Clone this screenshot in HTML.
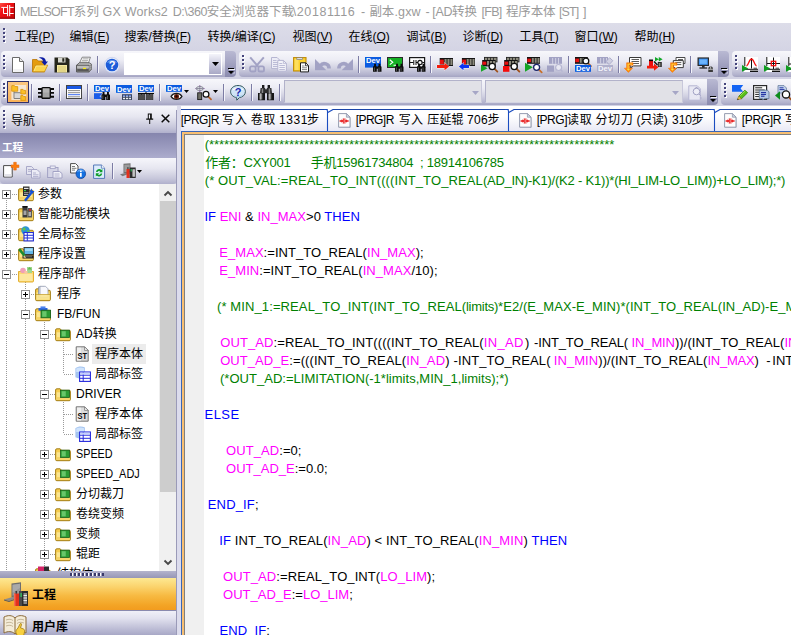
<!DOCTYPE html>
<html><head><meta charset="utf-8"><title>GX Works2</title>
<style>
*{box-sizing:border-box;margin:0;padding:0}
html,body{width:791px;height:635px;overflow:hidden}
body{position:relative;background:#d2d2e3;font-family:"Liberation Sans","Noto Sans CJK SC",sans-serif;font-size:12px;color:#000}
.a,.ic,.grip,.tb,.sep,.ovf,.cb{position:absolute}
.ic{overflow:visible}
svg text{font-family:"Liberation Sans",sans-serif}
#title{left:0;top:0;width:791px;height:23px;background:#fff}
#title span{position:absolute;top:3px;margin-left:-.5px;font-size:12.5px;color:#9a9a9a;white-space:nowrap;line-height:19px}
#menu{left:0;top:23px;width:791px;height:28px;background:linear-gradient(#dddde9,#d4d4e4)}
#menu span{position:absolute;margin-left:-.6px;top:6px;line-height:17px;font-size:12px;white-space:nowrap}
.grip{width:3px;background:repeating-linear-gradient(#45457c 0 2px,transparent 2px 4px) 0 0/2px 100% no-repeat,repeating-linear-gradient(transparent 0 1px,#fff 1px 3px,transparent 3px 4px) 1px 0/2px 100% no-repeat}
.tb{height:26px;background:linear-gradient(#f7f7fb 0%,#ececf4 35%,#d2d2e2 65%,#b4b4ce 90%,#a4a4c2 100%);border-radius:4px 0 0 4px}
.sep{width:1px;height:17px;background:#7c7ca4;box-shadow:1px 0 0 #f4f4fa}
.ovf{width:11px;height:26px;background:linear-gradient(#b9b9d3,#8a8aae);border-radius:0 4px 4px 0}
.cb{height:23px;background:#e1e1e7;border:1px solid #b2b2ca;border-bottom-color:#d4d4e2;border-right-color:#c8c8da}
#code{left:0;top:136px;width:791px;font-size:13px;line-height:18px;color:#000}
#code div{position:absolute;height:18px;white-space:pre;line-height:18px}
.g{color:#008000}.b{color:#0000ff}.m{color:#ff00ff}
.tr{position:absolute;font-size:12px;line-height:16px;height:16px;white-space:nowrap}
.ex{position:absolute;width:9px;height:9px;border:1px solid #919191;background:#fff}
.ex:before{content:"";position:absolute;left:1px;top:3px;width:5px;height:1px;background:#000}
.ex.p:after{content:"";position:absolute;left:3px;top:1px;width:1px;height:5px;background:#000}
.dv{position:absolute;width:1px;background:repeating-linear-gradient(#9a9a9a 0 1px,transparent 1px 2px)}
.dh{position:absolute;height:1px;background:repeating-linear-gradient(90deg,#9a9a9a 0 1px,transparent 1px 2px)}
.tab{position:absolute;top:112px;font-size:12px;line-height:17px;white-space:nowrap}
</style></head><body>
<div id="title" class="a"><svg class="ic" style="left:0px;top:3px" width="16" height="16" viewBox="0 0 16 16" ><defs><linearGradient id="lg1" x1="0" y1="0" x2="1" y2="1"><stop offset="0" stop-color="#ff5048"/><stop offset=".35" stop-color="#f01014"/><stop offset="1" stop-color="#c80408"/></linearGradient></defs><rect x="0" y="0" width="15" height="15.700" fill="url(#lg1)"/><path d="M14.500 0v15.700M0 15.200h15" stroke="#8c0404" stroke-width="1"/><path d="M7.600 2v11.200M9.700 2v11.200M1.300 4.400h6.300M9.700 4.400h4M3.500 10.500h4.100M9.700 10.500h4M3.500 4.400v6.100" stroke="#fff" stroke-width="1" fill="none"/></svg><span id="t0" style="left:20.4px;letter-spacing:-0.707px">MELSOFT</span><span id="t1" style="left:74.2px;letter-spacing:0.342px">系列</span><span id="t2" style="left:103.0px;letter-spacing:0.203px">GX Works2</span><span id="t3" style="left:173.2px;letter-spacing:-0.424px">D:\360</span><span id="t4" style="left:207.3px;letter-spacing:-0.059px">安全浏览器下载</span><span id="t5" style="left:293.3px;letter-spacing:0.574px">\20181116</span><span id="t6" style="left:361.5px;letter-spacing:0px">-</span><span id="t7" style="left:369.9px;letter-spacing:-0.058px">副本</span><span id="t8" style="left:395.0px;letter-spacing:0.149px">.gxw</span><span id="t9" style="left:426.0px;letter-spacing:0px">-</span><span id="t10" style="left:432.8px;letter-spacing:-0.281px">[AD</span><span id="t11" style="left:452.5px;letter-spacing:-0.008px">转换</span><span id="t12" style="left:482.1px;letter-spacing:-0.73px">[FB]</span><span id="t13" style="left:506.5px;letter-spacing:-0.129px">程序本体</span><span id="t14" style="left:559.5px;letter-spacing:-0.93px">[ST]</span><span id="t15" style="left:583.5px;letter-spacing:0px">]</span></div>
<div id="menu" class="a"><i class="grip" style="left:3px;top:5px;height:15px"></i>
<span style="left:15px">工程(<u>P</u>)</span>
<span style="left:70px">编辑(<u>E</u>)</span>
<span style="left:125px">搜索/替换(<u>F</u>)</span>
<span style="left:208px">转换/编译(<u>C</u>)</span>
<span style="left:293px">视图(<u>V</u>)</span>
<span style="left:349px">在线(<u>O</u>)</span>
<span style="left:407px">调试(<u>B</u>)</span>
<span style="left:463px">诊断(<u>D</u>)</span>
<span style="left:520px">工具(<u>T</u>)</span>
<span style="left:575px">窗口(<u>W</u>)</span>
<span style="left:635px">帮助(<u>H</u>)</span>
</div>
<div class="tb" style="left:1px;top:51px;width:224px"></div><div class="ovf" style="left:225px;top:51px"></div>
<div class="tb" style="left:239px;top:51px;width:479px"></div><div class="ovf" style="left:718px;top:51px"></div>
<div class="tb" style="left:732px;top:51px;width:60px"></div>
<i class="grip" style="left:3px;top:55px;height:15px"></i>
<i class="grip" style="left:242px;top:55px;height:15px"></i>
<i class="grip" style="left:735px;top:55px;height:15px"></i>
<i class="sep" style="left:97px;top:56px"></i>
<i class="sep" style="left:358px;top:56px"></i>
<i class="sep" style="left:430px;top:56px"></i>
<i class="sep" style="left:568px;top:56px"></i>
<i class="sep" style="left:618px;top:56px"></i>
<i class="sep" style="left:690px;top:56px"></i>
<svg class="ic" style="left:10px;top:57px" width="16" height="16" viewBox="0 0 16 16" ><path d="M2.5 .5h7l4 4v11h-11z" fill="#fff" stroke="#6a6a6a"/><path d="M9.5 .5v4h4" fill="#e8e8e8" stroke="#6a6a6a"/><path d="M3.5 12h9v3h-9z" fill="#ececf0" opacity=".7"/></svg>
<svg class="ic" style="left:32px;top:57px" width="16" height="16" viewBox="0 0 16 16" ><path d="M.5 2.500h4.500l1.200 1.500h6.300v10.800h-12z" fill="#e49c10" stroke="#b87404" stroke-width=".8"/><path d="M.7 14.800l2.800-6.600h12.200l-3.200 6.600z" fill="#fcd44c" stroke="#c88c0c" stroke-width=".8"/><path d="M2 14l2.200-5h10.300" fill="none" stroke="#fde890" stroke-width=".9"/><path d="M6.800 .8c3.600-1.400 6.800 .2 7.200 3.600h2l-3.200 4.200l-3.600-4.200h2c-.4-2-2.200-3-4.400-3.600z" fill="#0c1ca4"/></svg>
<svg class="ic" style="left:54px;top:57px" width="16" height="16" viewBox="0 0 16 16" ><path d="M.5 .5h13l2 2v13h-15z" fill="#26261c"/><rect x="4" y=".5" width="7.500" height="5" fill="#d8d8d0"/><rect x="8.300" y="1.200" width="2" height="3.500" fill="#26261c"/><rect x="3" y="8" width="10" height="7.500" fill="#f4e8a0"/><path d="M4 10h8M4 12h8M4 14h8" stroke="#c8b860" stroke-width=".8"/></svg>
<svg class="ic" style="left:76px;top:57px" width="16" height="16" viewBox="0 0 16 16" ><path d="M3.500 6.200l2.700-6h8.200l-2 6z" fill="#fff" stroke="#6a6a6a" stroke-width=".8"/><path d="M6.600 1.800h6M6 3.400h6M5.400 5h6" stroke="#8a8a8a" stroke-width=".7"/><path d="M.6 8.200l2.800-2.400h9.800l2.300 1.400v5.300l-2.300 2.300h-12.600z" fill="#c4c4c4" stroke="#4a4a4a" stroke-width=".8"/><path d="M.6 8.200h12.600v6.600h-12.600z" fill="#a0a0a0" stroke="#4a4a4a" stroke-width=".8"/><path d="M1 10h12" stroke="#d8d8d8" stroke-width="1"/><path d="M1.200 13h11.400" stroke="#3a3a3a" stroke-width="1.400"/><rect x="7" y="10.800" width="3" height="1.300" fill="#f8ec10"/><path d="M13.200 8.200l2.300-1v5.300l-2.300 2.300z" fill="#8a8a8a"/><path d="M13.800 9.500v3.500M14.800 8.800v3" stroke="#d0d0d0" stroke-width=".6" stroke-dasharray="1 1"/></svg>
<svg class="ic" style="left:104.3px;top:57px" width="16" height="16" viewBox="0 0 16 16" ><circle cx="8" cy="8" r="7.700" fill="#e6ecfa" stroke="#c0c8e8" stroke-width=".6"/><circle cx="8" cy="8" r="6.300" fill="#1c5cd8"/><path d="M3 6a5.500 5 0 0 1 10 0a9 5 0 0 0-10 0z" fill="#6a9cf0"/><text x="8" y="12" font-size="11" font-weight="bold" fill="#fff" text-anchor="middle">?</text></svg>
<svg class="ic" style="left:249px;top:57px" width="16" height="16" viewBox="0 0 16 16" ><path d="M1.200 .3l8.300 9.500M14.800 .3l-8.300 9.500" stroke="#a2a2c4" stroke-width="2" fill="none"/><rect x="1" y="9.300" width="5.600" height="5.200" rx="1.600" fill="none" stroke="#a2a2c4" stroke-width="1.800"/><rect x="9.400" y="9.300" width="5.600" height="5.200" rx="1.600" fill="none" stroke="#a2a2c4" stroke-width="1.800"/></svg>
<svg class="ic" style="left:271px;top:57px" width="16" height="16" viewBox="0 0 16 16" ><path d="M.5 .5h5.600l2.500 2.500v8.600h-8.100z" fill="#ececf6" stroke="#b6b6d2"/><path d="M2 3.500h3.500M2 5.500h5M2 7.500h5M2 9.500h5" stroke="#b6b6d2" stroke-width=".9"/><path d="M6.800 3.400h5.600l3 3v7.800h-8.600z" fill="#f2f2f9" stroke="#b6b6d2"/><path d="M12.400 3.400v3h3" fill="none" stroke="#b6b6d2" stroke-width=".8"/><path d="M8.300 6.500h3M8.300 8.500h5.600M8.300 10.500h5.600M8.300 12.500h5.600" stroke="#b6b6d2" stroke-width=".9"/></svg>
<svg class="ic" style="left:293px;top:57px" width="16" height="16" viewBox="0 0 16 16" ><rect x=".6" y=".6" width="12.400" height="13.400" fill="#fbd02c" stroke="#c08a08" stroke-width="1.100"/><rect x="1.600" y="1.600" width="4" height="11.400" fill="#fde470" opacity=".7"/><rect x="3.800" y=".9" width="5.800" height="1.700" fill="#fff" stroke="#777" stroke-width=".7"/><path d="M7.500 5.800h5.200l2.800 2.800v6.300h-8z" fill="#fff" stroke="#1a1a1a" stroke-width="1"/><path d="M12.500 5.800v3h3" fill="none" stroke="#1a1a1a" stroke-width=".8"/><path d="M9 9h2.500M9 10.800h5M9 12.600h5" stroke="#666" stroke-width=".8"/></svg>
<svg class="ic" style="left:315px;top:57px" width="16" height="16" viewBox="0 0 16 16" ><path d="M0 2v11.200h11.300z" fill="#a2a2c4"/><path d="M5.500 8.500a4.800 4.800 0 0 1 8.600 3" fill="none" stroke="#a2a2c4" stroke-width="3.600"/></svg>
<svg class="ic" style="left:337px;top:57px" width="16" height="16" viewBox="0 0 16 16" ><path d="M16 2v11.200h-11.300z" fill="#a2a2c4"/><path d="M10.500 8.500a4.800 4.800 0 0 0-8.600 3" fill="none" stroke="#a2a2c4" stroke-width="3.600"/></svg>
<svg class="ic" style="left:365px;top:57px" width="16" height="16" viewBox="0 0 16 16" ><rect x="0" y="0" width="16" height="10.6" fill="#0b5be0"/><text x="1" y="6.3" font-size="7.6" font-weight="bold" fill="#fff" textLength="14" lengthAdjust="spacingAndGlyphs">Dev</text><path d="M9.1 6.8h1.900v2l.8 1v5h-3.800v-5l1.100-1zM13.5 6.8h1.900v2l1.100 1v5h-3.800v-5l.8-1zM11.5 9.4h1.500v2.400h-1.500z" fill="#0c0c0c"/><path d="M8.9 10.4h.9v3.600h-.9zM13.6 10.4h.9v3.600h-.9z" fill="#5a5a5a"/></svg>
<svg class="ic" style="left:387px;top:57px" width="16" height="16" viewBox="0 0 16 16" ><rect x=".5" y=".5" width="15" height="10" fill="#14b024" stroke="#2a2a2a" stroke-width="1"/><path d="M2.800 2.800l3 2.400-3 2.400M6.500 8.300h3" stroke="#fff" stroke-width="1.100" fill="none"/><path d="M9.1 6.8h1.900v2l.8 1v5h-3.800v-5l1.100-1zM13.5 6.8h1.900v2l1.100 1v5h-3.800v-5l.8-1zM11.5 9.4h1.500v2.400h-1.500z" fill="#0c0c0c"/><path d="M8.9 10.4h.9v3.600h-.9zM13.6 10.4h.9v3.600h-.9z" fill="#5a5a5a"/></svg>
<svg class="ic" style="left:409px;top:57px" width="16" height="16" viewBox="0 0 16 16" ><rect x=".6" y=".6" width="15" height="9.800" fill="#fff" stroke="#1a1a1a" stroke-width="1.200"/><path d="M1 5.500h3.500M4.800 3v5M7 3v5M7 5.500h2M13.200 5.500h2" stroke="#111" stroke-width="1" fill="none"/><circle cx="11" cy="5.500" r="2.100" fill="none" stroke="#111" stroke-width="1.100"/><path d="M9.1 6.8h1.900v2l.8 1v5h-3.800v-5l1.100-1zM13.5 6.8h1.900v2l1.100 1v5h-3.800v-5l.8-1zM11.5 9.4h1.500v2.400h-1.500z" fill="#0c0c0c"/><path d="M8.9 10.4h.9v3.600h-.9zM13.6 10.4h.9v3.600h-.9z" fill="#5a5a5a"/></svg>
<svg class="ic" style="left:437px;top:57px" width="16" height="16" viewBox="0 0 16 16" ><rect x="2.7" y="1" width="13.3" height="8" fill="#141414"/><rect x="3.0" y="2.6" width="3.800" height="4.8" fill="#e81010"/><rect x="7.50" y="2" width="2.10" height="6" fill="#8c8a7c"/><rect x="10.45" y="2" width="2.10" height="6" fill="#8c8a7c"/><rect x="13.40" y="2" width="2.10" height="6" fill="#8c8a7c"/><path d="M0 8h7.500v-2.300l4.600 3.800-4.600 3.800v-2.300h-7.500z" fill="#f41c0c" stroke="#fff" stroke-width=".7" paint-order="stroke"/></svg>
<svg class="ic" style="left:459px;top:57px" width="16" height="16" viewBox="0 0 16 16" ><rect x="2.9" y="1" width="13.1" height="8" fill="#141414"/><rect x="3.1999999999999997" y="2.6" width="3.800" height="4.8" fill="#e81010"/><rect x="7.70" y="2" width="2.03" height="6" fill="#8c8a7c"/><rect x="10.58" y="2" width="2.03" height="6" fill="#8c8a7c"/><rect x="13.47" y="2" width="2.03" height="6" fill="#8c8a7c"/><path d="M10 8h-5.500v-2.300l-4.600 3.800 4.600 3.800v-2.300h5.500z" fill="#0c34f4" stroke="#fff" stroke-width=".7" paint-order="stroke"/></svg>
<svg class="ic" style="left:481px;top:57px" width="16" height="16" viewBox="0 0 16 16" ><rect x="3.500" y=".4" width="12.500" height="4.500" fill="#8c8a7c" stroke="#222" stroke-width=".9"/><path d="M6.500 .5v4M9.500 .5v4M12.500 .5v4" stroke="#222" stroke-width=".8"/><rect x="1.2" y="3" width="13.5" height="6.4" fill="#141414"/><rect x="1.5" y="4.6" width="3.800" height="3.2" fill="#e81010"/><rect x="6.00" y="4" width="2.17" height="4.4" fill="#8c8a7c"/><rect x="9.02" y="4" width="2.17" height="4.4" fill="#8c8a7c"/><rect x="12.03" y="4" width="2.17" height="4.4" fill="#8c8a7c"/><path d="M0 7.600v7.200l6.600-3.600z" fill="#14a424"/><path d="M13.37 11.67l3 3" stroke="#a0501a" stroke-width="1.8" stroke-linecap="round"/><circle cx="11.2" cy="9.5" r="3.1" fill="#fff" stroke="#111" stroke-width="1.3"/></svg>
<svg class="ic" style="left:503px;top:57px" width="16" height="16" viewBox="0 0 16 16" ><rect x="3.500" y=".4" width="12.500" height="4.500" fill="#8c8a7c" stroke="#222" stroke-width=".9"/><path d="M6.500 .5v4M9.500 .5v4M12.500 .5v4" stroke="#222" stroke-width=".8"/><rect x="1.2" y="3" width="13.5" height="6.4" fill="#141414"/><rect x="1.5" y="4.6" width="3.800" height="3.2" fill="#e81010"/><rect x="6.00" y="4" width="2.17" height="4.4" fill="#8c8a7c"/><rect x="9.02" y="4" width="2.17" height="4.4" fill="#8c8a7c"/><rect x="12.03" y="4" width="2.17" height="4.4" fill="#8c8a7c"/><rect x="0" y="9" width="6.400" height="5.800" fill="#f40c0c"/><path d="M13.37 11.67l3 3" stroke="#a0501a" stroke-width="1.8" stroke-linecap="round"/><circle cx="11.2" cy="9.5" r="3.1" fill="#fff" stroke="#111" stroke-width="1.3"/></svg>
<svg class="ic" style="left:525px;top:57px" width="16" height="16" viewBox="0 0 16 16" ><rect x="2" y="0" width="13" height="6.8" fill="#141414"/><rect x="2.3" y="1.6" width="3.800" height="3.5999999999999996" fill="#e81010"/><rect x="6.80" y="1" width="2.00" height="4.8" fill="#8c8a7c"/><rect x="9.65" y="1" width="2.00" height="4.8" fill="#8c8a7c"/><rect x="12.50" y="1" width="2.00" height="4.8" fill="#8c8a7c"/><path d="M0 5.800v9l7.800-4.500z" fill="#14a424"/><path d="M13.7 12.4l3 3" stroke="#c8702a" stroke-width="1.8" stroke-linecap="round"/><circle cx="11.6" cy="10.3" r="3" fill="#fff" stroke="#1a2468" stroke-width="1.3"/></svg>
<svg class="ic" style="left:547px;top:57px" width="16" height="16" viewBox="0 0 16 16" ><rect x="2" y="0" width="13" height="6.8" fill="#a2a2c4"/><rect x="5.3" y="1" width=".8" height="5.8" fill="#dcdcec"/><rect x="8.3" y="1" width=".8" height="5.8" fill="#dcdcec"/><rect x="11" y="1" width=".8" height="5.8" fill="#dcdcec"/><rect x="0" y="8.500" width="7" height="6.300" fill="#a2a2c4"/><circle cx="11.600" cy="10.500" r="3" fill="#e8e8f2" stroke="#b6b6d2" stroke-width="1.200"/><path d="M14 13l1.500 1.500" stroke="#b6b6d2" stroke-width="1.400"/></svg>
<svg class="ic" style="left:575px;top:57px" width="16" height="16" viewBox="0 0 16 16" ><rect x="0" y="0" width="12.8" height="6.8" fill="#141414"/><rect x="0.3" y="1.6" width="3.800" height="3.5999999999999996" fill="#e81010"/><rect x="4.80" y="1" width="1.93" height="4.8" fill="#8c8a7c"/><rect x="7.58" y="1" width="1.93" height="4.8" fill="#8c8a7c"/><rect x="10.37" y="1" width="1.93" height="4.8" fill="#8c8a7c"/><path d="M12.93 6.029999999999999l3 3" stroke="#b8642a" stroke-width="1.8" stroke-linecap="round"/><circle cx="10.9" cy="4" r="2.9" fill="#fff" stroke="#111" stroke-width="1.3"/><rect x="0" y="8" width="16" height="6.8" fill="#0b5be0"/><text x="1" y="13.700000000000001" font-size="7.6" font-weight="bold" fill="#fff" textLength="14" lengthAdjust="spacingAndGlyphs">Dev</text></svg>
<svg class="ic" style="left:597px;top:57px" width="16" height="16" viewBox="0 0 16 16" ><rect x="0" y="0" width="11" height="6.5" fill="#a2a2c4"/><rect x="3.3" y="1" width=".8" height="5.5" fill="#dcdcec"/><rect x="6.3" y="1" width=".8" height="5.5" fill="#dcdcec"/><rect x="9" y="1" width=".8" height="5.5" fill="#dcdcec"/><path d="M9 4.500l3.600-3.800l3.200 3l-3.600 3.800z" fill="#d0d0e2" stroke="#a2a2c4" stroke-width=".8"/><rect x="0" y="8" width="16" height="6.8" fill="#b0b0cc"/><text x="1" y="13.700000000000001" font-size="7.6" font-weight="bold" fill="#f4f4fa" textLength="14" lengthAdjust="spacingAndGlyphs">Dev</text></svg>
<svg class="ic" style="left:625px;top:57px" width="16" height="16" viewBox="0 0 16 16" ><path d="M4.5 0.5h11.5v8.4h-7.5l-3 2.200l.6-2.200h-1.600z" fill="#fff" stroke="#3a3a3a" stroke-width="1"/><path d="M6.5 2.5h7.5" stroke="#4a4a4a" stroke-width=".9"/><path d="M6.5 4.5h7.5" stroke="#4a4a4a" stroke-width=".9"/><path d="M6.5 6.5h7.5" stroke="#4a4a4a" stroke-width=".9"/><path d="M1.6 5.8h6.400v2.400h-3.400v3h2.900l-4.100 4.200l-4.100-4.200h2.300z" fill="#fc8c08" stroke="#fc6c00" stroke-width=".5"/><path d="M2.6 6.8h4.400v.6h-3.400v4.600h1.400l-1.600 1.800l-1.600-1.800h.8z" fill="#fcd848"/></svg>
<svg class="ic" style="left:647px;top:57px" width="16" height="16" viewBox="0 0 16 16" ><rect x="2" y="3.200" width="4" height="6" fill="#ec1010"/><rect x="2" y="2.500" width="4" height="1.600" fill="#0a0a0a"/><rect x="10.800" y="5" width="4" height="5" fill="#2c2c2c"/><rect x="11.800" y="6" width="1.600" height="3.500" fill="#8c8a7c"/><path d="M7 4.500l3.500 3.500" stroke="#111" stroke-width="1.400"/><path d="M8 0v4.600l3.800-2.300zM11.800 0v4.600l3.800-2.300z" fill="#10a828"/><path d="M0 8.800h7v-2.200l4.400 3.600l-4.400 3.600v-2.200h-7z" fill="#f41c0c"/></svg>
<svg class="ic" style="left:669px;top:57px" width="16" height="16" viewBox="0 0 16 16" ><path d="M7 0.5h9v6h-5l-3 2.200l.6-2.200h-1.600z" fill="#fff" stroke="#4a4a4a" stroke-width="1"/><path d="M9 2.5h5" stroke="#4a4a4a" stroke-width=".9"/><path d="M9 4.5h5" stroke="#4a4a4a" stroke-width=".9"/><path d="M4.3 3.6h10v7h-6l-3 2.200l.6-2.200h-1.600z" fill="#fff" stroke="#3a3a3a" stroke-width="1"/><path d="M6.3 5.6h6" stroke="#4a4a4a" stroke-width=".9"/><path d="M6.3 7.6h6" stroke="#4a4a4a" stroke-width=".9"/><path d="M1.6 5.8h6.400v2.400h-3.400v3h2.900l-4.100 4.200l-4.100-4.200h2.300z" fill="#fc8c08" stroke="#fc6c00" stroke-width=".5"/><path d="M2.6 6.8h4.400v.6h-3.400v4.600h1.400l-1.600 1.800l-1.600-1.800h.8z" fill="#fcd848"/></svg>
<svg class="ic" style="left:697px;top:57px" width="16" height="16" viewBox="0 0 16 16" ><rect x=".5" y=".4" width="11.500" height="8.600" fill="#2a2a2a"/><rect x="1.800" y="1.600" width="9" height="6.200" fill="#3c94f8"/><rect x="2.800" y="2.600" width="7" height="4.200" fill="#6cb4fc"/><rect x="5" y="9" width="2.600" height="1.600" fill="#2a2a2a"/><rect x="2.400" y="10.400" width="7.800" height="1.200" fill="#1a1a1a"/><path d="M11.300 11.500c0-2.600 4.600-2.600 4.600 0v3.500h-4.600z" fill="#3a3a3a"/><rect x="11.300" y="11.800" width="4.600" height=".9" fill="#c8c8c8"/><rect x="13.200" y="9.600" width=".9" height="2.200" fill="#c8c8c8"/></svg>
<svg class="ic" style="left:742px;top:57px" width="16" height="16" viewBox="0 0 16 16" ><rect x="2" y="0" width="14" height="15" fill="#fff"/><path d="M2.800 0v9M2 12.300h14" stroke="#111" stroke-width="1"/><path d="M0 8v6.800l6.400-3.400z" fill="#109c20"/><path d="M8 14.300h8" stroke="#111" stroke-width="1.400"/><path d="M11.500 11.300h3.500" stroke="#666" stroke-width="1.400"/><path d="M9.500 1v10.500" stroke="#111" stroke-width="1"/><path d="M4.500 9c2.200-.5 2.500-7 5-7s2.800 6.500 5 7" stroke="#f41010" stroke-width="1.300" fill="none"/></svg>
<svg class="ic" style="left:764px;top:57px" width="16" height="16" viewBox="0 0 16 16" ><rect x="2" y="0" width="14" height="15" fill="#fff"/><path d="M2.800 0v9M2 12.300h14" stroke="#111" stroke-width="1"/><path d="M0 8v6.800l6.400-3.400z" fill="#109c20"/><path d="M8 14.300h8" stroke="#111" stroke-width="1.400"/><path d="M11.500 11.300h3.500" stroke="#666" stroke-width="1.400"/><path d="M9.500 .5v11.500M3 6.500h13" stroke="#111" stroke-width="1"/><rect x="7.300" y="4.300" width="4.400" height="4.400" fill="none" stroke="#f41010" stroke-width="1.300"/></svg>
<svg class="ic" style="left:786px;top:57px" width="16" height="16" viewBox="0 0 16 16" ><rect x="2" y="0" width="14" height="15" fill="#fff"/><path d="M2.800 0v9M2 12.300h14" stroke="#111" stroke-width="1"/><path d="M0 8v6.800l6.400-3.400z" fill="#109c20"/><path d="M8 14.300h8" stroke="#111" stroke-width="1.400"/><path d="M11.500 11.300h3.500" stroke="#666" stroke-width="1.400"/><path d="M3 7h2.500v-5h3" stroke="#111" fill="none"/></svg>
<div class="a" style="left:124px;top:53px;width:98px;height:22px;background:#fff"></div>
<div class="a" style="left:209px;top:54px;width:12px;height:20px;background:linear-gradient(#f4f4fa,#c4c4da 60%,#a8a8c6)"></div>
<svg class="ic" style="left:212px;top:62px" width="7" height="4" viewBox="0 0 7 4"><path d="M0 0h7L3.5 4z" fill="#000"/></svg>
<svg class="ic" style="left:227px;top:67px" width="8" height="8" viewBox="0 0 8 8"><path d="M1 1h6v1H1zM1 4h6L4 7z" fill="#000"/><path d="M2 2h6v1H2zM5 8l3-3v1z" fill="#fff" opacity=".9"/></svg>
<svg class="ic" style="left:720px;top:67px" width="8" height="8" viewBox="0 0 8 8"><path d="M1 1h6v1H1zM1 4h6L4 7z" fill="#000"/><path d="M2 2h6v1H2zM5 8l3-3v1z" fill="#fff" opacity=".9"/></svg>
<div class="tb" style="left:1px;top:79px;width:706px"></div><div class="ovf" style="left:707px;top:79px"></div>
<div class="tb" style="left:721px;top:79px;width:71px"></div>
<i class="grip" style="left:3px;top:83px;height:15px"></i>
<i class="grip" style="left:724px;top:83px;height:15px"></i>
<i class="sep" style="left:31px;top:84px"></i>
<i class="sep" style="left:59px;top:84px"></i>
<i class="sep" style="left:87px;top:84px"></i>
<i class="sep" style="left:159px;top:84px"></i>
<i class="sep" style="left:223px;top:84px"></i>
<i class="sep" style="left:251px;top:84px"></i>
<i class="sep" style="left:279px;top:84px"></i>
<div class="a" style="left:7px;top:81px;width:22px;height:22px;background:linear-gradient(#fcc880,#f9b25a);border:1px solid #31316a"></div>
<svg class="ic" style="left:10px;top:85px" width="16" height="16" viewBox="0 0 16 16" ><rect x="1.4" y="0" width="14.8" height="15" fill="#f4f0ea" opacity=".8"/><rect x="4.5" y="8" width="6" height="5.5" fill="#d8d8d8"/><path d="M4 5.500v8h6.500M4 7.700h6.500" stroke="#808080" stroke-width="1" fill="none"/><path d="M1.7 0.6h2.7l.8 1h2.5v4.6h-6z" fill="#fcc026" stroke="#d89008" stroke-width=".8"/><path d="M10.8 4.4h2.2l.8 1h1.8v3.6h-4.8z" fill="#fcc026" stroke="#d89008" stroke-width=".8"/><path d="M10.8 10.6h2.2l.8 1h1.8v3.8h-4.8z" fill="#fcc026" stroke="#d89008" stroke-width=".8"/></svg>
<svg class="ic" style="left:38px;top:85px" width="16" height="16" viewBox="0 0 16 16" ><path d="M0 4h16M0 7.900h16M0 11.800h16" stroke="#0a0a0a" stroke-width="1.900"/><rect x="3.900" y="2.600" width="8.400" height="10.600" rx="1" fill="#a4a4a4" stroke="#0a0a0a" stroke-width="1.400"/><rect x="5" y="3.600" width="6.200" height="4" fill="#bcbcbc" opacity=".7"/></svg>
<svg class="ic" style="left:66px;top:85px" width="16" height="16" viewBox="0 0 16 16" ><rect x=".5" y=".5" width="15" height="13" fill="#fff" stroke="#444" stroke-width="1"/><rect x="1" y="1" width="14" height="3" fill="#1a58e4"/><path d="M2 5.600h12M2 7.700h12M2 11.800h12" stroke="#8a8a8a" stroke-width="1"/><path d="M2 9.700h12" stroke="#3a6af0" stroke-width="1"/></svg>
<svg class="ic" style="left:94px;top:85px" width="16" height="16" viewBox="0 0 16 16" ><rect x="0" y="0" width="16" height="6.8" fill="#0b5be0"/><text x="1" y="5.699999999999999" font-size="7.6" font-weight="bold" fill="#fff" textLength="14" lengthAdjust="spacingAndGlyphs">Dev</text><rect x="0" y="8.200" width="8" height="5.800" fill="#1a5ce8"/><path d="M8 9l-2.500 2.200 2.500 2.200z" fill="#9ab8f4"/><path d="M8.6 7h1.900v2l.8 1v5h-3.800v-5l1.100-1zM13.0 7h1.900v2l1.100 1v5h-3.800v-5l.8-1zM11.0 9.6h1.500v2.400h-1.500z" fill="#0c0c0c"/><path d="M8.4 10.6h.9v3.600h-.9zM13.1 10.6h.9v3.600h-.9z" fill="#5a5a5a"/></svg>
<svg class="ic" style="left:116px;top:85px" width="16" height="16" viewBox="0 0 16 16" ><rect x="0" y="0" width="16" height="7.8" fill="#0b5be0"/><text x="1" y="6.699999999999999" font-size="7.6" font-weight="bold" fill="#fff" textLength="14" lengthAdjust="spacingAndGlyphs">Dev</text><rect x="6" y="9.200" width="10" height="5.800" fill="#3a4660"/><rect x="7" y="10.200" width="8" height="1.400" fill="#6a90f0"/><path d="M7 11.600h8v2.600h-8z" fill="#fff"/><path d="M6 12.600h10M9.500 10v5M12.600 10v5" stroke="#3a4660" stroke-width=".9"/></svg>
<svg class="ic" style="left:138px;top:85px" width="16" height="16" viewBox="0 0 16 16" ><rect x="0" y="0" width="16" height="6.8" fill="#0b5be0"/><text x="1" y="5.699999999999999" font-size="7.6" font-weight="bold" fill="#fff" textLength="14" lengthAdjust="spacingAndGlyphs">Dev</text><path d="M0 8.500h16M8 6.800v1.700M3.500 8.500v1.500M11.500 8.500v1.500" stroke="#0a0a0a" stroke-width="1"/><rect x=".3" y="9.500" width="6.600" height="5.200" fill="#4c4c4c" stroke="#2a2a2a" stroke-width=".6"/><rect x="8.300" y="9.500" width="6.600" height="5.200" fill="#4c4c4c" stroke="#2a2a2a" stroke-width=".6"/></svg>
<svg class="ic" style="left:166px;top:85px" width="16" height="16" viewBox="0 0 16 16" ><rect x="0" y="0" width="16" height="6.8" fill="#0b5be0"/><text x="1" y="5.699999999999999" font-size="7.6" font-weight="bold" fill="#fff" textLength="14" lengthAdjust="spacingAndGlyphs">Dev</text><path d="M5 11.400c2.500-4 8.500-4 11 0c-2.500 4-8.500 4-11 0z" fill="#fff" stroke="#1a1a1a" stroke-width="1.100"/><circle cx="10.500" cy="11.400" r="2.500" fill="#6a1c08"/><circle cx="10.500" cy="11.400" r="1.100" fill="#1a0500"/></svg>
<svg class="ic" style="left:196px;top:85px" width="16" height="16" viewBox="0 0 16 16" ><path d="M3.800 .2v7M-.5 3.500h9" stroke="#6a2a8a" stroke-width=".8"/><ellipse cx="3.800" cy="3.500" rx="3.600" ry="2" fill="#ececf4" stroke="#7a7a8a" stroke-width=".9"/><path d="M3.800 1.500v4M.5 3.500h6.600" stroke="#7a7a8a" stroke-width=".8"/><rect x="1.700" y="7.800" width="4" height="6.800" fill="#6e6e64" stroke="#1a1a1a" stroke-width=".9"/><path d="M12.03 11.33l3 3" stroke="#b8642a" stroke-width="1.8" stroke-linecap="round"/><circle cx="10" cy="9.3" r="2.9" fill="#fff" stroke="#111" stroke-width="1.3"/></svg>
<svg class="ic" style="left:230px;top:85px" width="16" height="16" viewBox="0 0 16 16" ><path d="M8 .5c4.300 0 7.400 2.700 7.400 6.100c0 3.200-2.700 5.500-6 6l-2.600 2.600l-.2-2.600c-3.400-.6-6-2.800-6-6c0-3.400 3.100-6.100 7.400-6.100z" fill="#cfe4f6" stroke="#20484c" stroke-width=".9"/><path d="M2.200 5.500c1-3 9-4.300 11.600 0c-3.300-1.800-8.300-1.800-11.600 0z" fill="#fff"/><path d="M3 9.500c2 2.200 8 2.200 10.500-.5c-1 2.600-3.500 3.400-5.500 3.400s-4-.8-5-2.900z" fill="#a8cce8"/><text x="8.100" y="10.800" font-size="11" font-weight="bold" fill="#1828b0" text-anchor="middle" font-family="Liberation Serif,serif">?</text></svg>
<svg class="ic" style="left:258px;top:85px" width="16" height="16" viewBox="0 0 16 16" ><path d="M4 0h2.400v3h-2.400zM9.600 0h2.400v3h-2.400z" fill="#1c1c1c"/><path d="M2.600 3h4.600v1.200h1.600v-1.200h4.600l.6 5.200h-12z" fill="#2c2c2c"/><path d="M3.700 3.600h1.500v4.400h-1.500zM10.700 3.600h1.500v4.400h-1.500z" fill="#8a8a8a"/><path d="M0 8h7v7.200h-7zM9 8h7v7.200h-7z" fill="#161616"/><path d="M1.300 8.600h3v6h-3zM10.300 8.600h3v6h-3z" fill="#7c7c7c"/><path d="M2 8.600h1.200v6h-1.200zM11 8.600h1.200v6h-1.200z" fill="#b4b4b4"/></svg>
<svg class="ic" style="left:688px;top:85px" width="16" height="16" viewBox="0 0 16 16" ><path d="M.8 .8h8.500l3 3v11.400h-11.500z" fill="#e8e8f3" stroke="#b6b6d2" stroke-width="1"/><circle cx="8.500" cy="6.500" r="3.300" fill="#eeeef7" stroke="#a2a2c4" stroke-width="1"/><path d="M7.500 2.600h2M11 9l1.600 1.600M12.500 13h1" stroke="#a2a2c4" stroke-width="1"/></svg>
<svg class="ic" style="left:732px;top:85px" width="16" height="16" viewBox="0 0 16 16" ><path d="M0 0h11.200l-2.600 3.400l2.600 3.400h-11.200z" fill="#1464f4"/><path d="M6.800 11.200l6.200-6l2.600 2.600l-6.200 6z" fill="#58c018" stroke="#2c8008" stroke-width=".8"/><path d="M8.300 10.700l5-4.800" stroke="#a0e860" stroke-width=".9"/><path d="M6.800 11.200l-1.600 3.600l4.200-1z" fill="#f4c838" stroke="#806010" stroke-width=".5"/><path d="M5.200 14.800l.6-1.400l1 1z" fill="#111"/></svg>
<svg class="ic" style="left:753px;top:85px" width="16" height="16" viewBox="0 0 16 16" ><rect x=".6" y=".6" width="13" height="13.800" fill="#fff" stroke="#2a2a2a" stroke-width="1.200"/><path d="M2.200 2.800h7M2.200 5h9.500M2.200 7.200h4M2.200 9.400h4M2.200 11.600h4" stroke="#222" stroke-width="1"/><path d="M6.300 5.200h8l1.700 1.600v6.800h-4.600l-1.600 1.400l-.2-1.400h-3.300z" fill="#b4c8e4" stroke="#5a7494" stroke-width=".8"/><path d="M8 7.600h5M8 9.400h5M8 11.200h3.500" stroke="#14249c" stroke-width="1"/></svg>
<svg class="ic" style="left:775px;top:85px" width="16" height="16" viewBox="0 0 16 16" ><path d="M3 .6h6l2.400 2.400v5h-8.400z" fill="#c4d4ec" stroke="#64789c" stroke-width=".8"/><path d="M4.500 2.800h4M4.500 4.600h5" stroke="#14249c" stroke-width=".9"/><path d="M0 10.500l5-4.300v8.600z" fill="#0c8c1c"/><path d="M13.52 11.92l3 3" stroke="#a0501a" stroke-width="1.8" stroke-linecap="round"/><circle cx="11" cy="9.4" r="3.6" fill="#fff" stroke="#111" stroke-width="1.3"/></svg>
<svg class="ic" style="left:184px;top:90px" width="5" height="3" viewBox="0 0 5 3"><path d="M0 0h5L2.5 3z" fill="#000"/></svg>
<svg class="ic" style="left:213px;top:90px" width="5" height="3" viewBox="0 0 5 3"><path d="M0 0h5L2.5 3z" fill="#000"/></svg>
<div class="cb" style="left:284px;top:80px;width:198px"></div>
<div class="cb" style="left:485px;top:80px;width:198px"></div>
<svg class="ic" style="left:472px;top:91px" width="7" height="4" viewBox="0 0 7 4"><path d="M0 0h7L3.5 4z" fill="#a6a6c6"/></svg>
<svg class="ic" style="left:672px;top:91px" width="7" height="4" viewBox="0 0 7 4"><path d="M0 0h7L3.5 4z" fill="#a6a6c6"/></svg>
<svg class="ic" style="left:709px;top:95px" width="8" height="8" viewBox="0 0 8 8"><path d="M1 1h6v1H1zM1 4h6L4 7z" fill="#000"/><path d="M2 2h6v1H2zM5 8l3-3v1z" fill="#fff" opacity=".9"/></svg>
<div class="a" style="left:0;top:106px;width:177px;height:27px;background:linear-gradient(#f6f6fb 0%,#e6e6f0 40%,#c6c6da 80%,#b0b0cc 100%);border-radius:4px 0 0 0"></div>
<i class="grip" style="left:3px;top:110px;height:19px"></i>
<div class="a" style="left:11px;top:113px;font-size:12px;line-height:17px">导航</div>
<svg class="ic" style="left:146px;top:113px" width="8" height="12" viewBox="0 0 8 12" ><path d="M1.800 .5h4v5h1.400v1.200h-3v4.300h-1v-4.300h-3v-1.200h1.600z" fill="#0a0a0a"/><rect x="2.800" y="1.500" width="1.300" height="4" fill="#f0f0f6"/></svg><svg class="ic" style="left:161px;top:113.7px" width="9" height="9" viewBox="0 0 9 9" ><path d="M.7 .7l7.600 7.600M8.300 .7l-7.600 7.600" stroke="#0a0a0a" stroke-width="1.500"/></svg>
<div class="a" style="left:0;top:133px;width:177px;height:25px;background:linear-gradient(#8585ad,#9c9cc0 60%,#adadcd)"></div>
<div class="a" style="left:2px;top:139px;font-size:10.5px;line-height:16px;font-weight:bold;color:#fff">工程</div>
<div class="a" style="left:0;top:158px;width:177px;height:26px;background:linear-gradient(#f6f6fb 0%,#e6e6f0 40%,#c6c6da 80%,#b0b0cc 100%);border-radius:0 0 4px 4px"></div>
<svg class="ic" style="left:3px;top:162px" width="16" height="16" viewBox="0 0 16 16" ><path d="M.6 3.600h7.400l1.200 1.200v10.200h-8.600z" fill="#fff" stroke="#4a4a4a" stroke-width="1"/><path d="M1.500 12h7v2.500h-7z" fill="#e4e4ea"/><path d="M10.700 .3h2.600v2.600h2.600v2.600h-2.600v2.600h-2.600v-2.600h-2.600v-2.600h2.600z" fill="#fc7c0c" stroke="#e05c00" stroke-width=".5"/></svg>
<svg class="ic" style="left:25.5px;top:163px" width="16" height="16" viewBox="0 0 16 16" ><path d="M.5 3.500h5l2 2v6h-7z" fill="#e4e4f0" stroke="#a2a2c4" stroke-width=".9"/><path d="M2 6.500h3.500M2 8.300h3.500" stroke="#a2a2c4" stroke-width=".8"/><path d="M5.500 6.500h5.500l3 3v5.500h-8.500z" fill="#ececf6" stroke="#a2a2c4" stroke-width=".9"/><path d="M7 10h3M7 11.800h5.500M7 13.600h5.500" stroke="#a2a2c4" stroke-width=".8"/></svg>
<svg class="ic" style="left:47px;top:163px" width="16" height="16" viewBox="0 0 16 16" ><rect x=".6" y="4.500" width="10.400" height="10" fill="#d4d4e6" stroke="#a2a2c4" stroke-width="1"/><rect x="3.200" y="3" width="5" height="2.600" fill="#ececf5" stroke="#a2a2c4" stroke-width=".8"/><path d="M6 8.500h6.500l2.500 2v4.500h-9z" fill="#f0f0f8" stroke="#a2a2c4" stroke-width="1"/><path d="M7.500 11h5M7.500 13h5" stroke="#a2a2c4" stroke-width=".8"/></svg>
<svg class="ic" style="left:70px;top:162.5px" width="16" height="16" viewBox="0 0 16 16" ><path d="M.6 .6h5l2.400 2.400v7h-7.400z" fill="#fff" stroke="#3a3a3a" stroke-width=".9"/><path d="M2 3.500h3M2 5.300h4.500M2 7.100h3" stroke="#5a5a5a" stroke-width=".8"/><circle cx="10.800" cy="10.800" r="4.800" fill="#1470e0" stroke="#0a3c98" stroke-width=".7"/><path d="M7 9a4 4 0 0 1 7.600 0a6 3 0 0 0-7.600 0z" fill="#5ca4f4"/><rect x="10" y="10" width="1.700" height="3.800" fill="#fff"/><rect x="10" y="7.600" width="1.700" height="1.600" fill="#fff"/></svg>
<svg class="ic" style="left:92px;top:163px" width="16" height="16" viewBox="0 0 16 16" ><path d="M1.600 2h7.800l3.200 3.200v10.200h-11z" fill="#dcecfc" stroke="#5478b8" stroke-width="1"/><path d="M9.400 2v3.200h3.200" fill="#fff" stroke="#5478b8" stroke-width=".8"/><path d="M4 9a3.200 3.200 0 0 1 5.400-2l1-1v3.300h-3.300l1.100-1.100a1.700 1.700 0 0 0-2.700 .8zM10.200 10.600a3.200 3.200 0 0 1-5.400 2l-1 1v-3.300h3.300l-1.100 1.100a1.700 1.700 0 0 0 2.700-.8z" fill="#0c9c28"/></svg>
<svg class="ic" style="left:119.5px;top:162.5px" width="16" height="16" viewBox="0 0 16 16" ><path d="M3.500 .8l7-.5v9l-7 1.200z" fill="#6e6e6e"/><path d="M4.300 1.800l5.400-.4v6.800l-5.400 1z" fill="#9c9c9c"/><path d="M0 11.200l3.500-.8l7-1.200v1l-8 3z" fill="#7a7a7a"/><rect x="6.500" y="6" width="3.200" height="9" fill="#e4301c"/><rect x="7.300" y="4.200" width="1.200" height="2" fill="#3a3a3a"/><rect x="9.700" y="4.500" width="6" height="10.500" fill="#2c2c2c"/><rect x="10.700" y="6" width="1" height="2.500" fill="#30d060"/><rect x="12.500" y="6" width="2.400" height="8" fill="#a0a0a0"/><path d="M12.500 8h2.400M12.500 10h2.400M12.500 12h2.400" stroke="#eee" stroke-width=".9"/></svg>
<i class="sep" style="left:112px;top:163px;height:16px"></i>
<svg class="ic" style="left:136.500px;top:170px" width="5" height="3" viewBox="0 0 5 3"><path d="M0 0h5L2.5 3z" fill="#000"/></svg>
<div class="a" style="left:0;top:184px;width:177px;height:388px;background:#fff;overflow:hidden" id="tree">
<div class="a" style="left:159px;top:0;width:18px;height:388px;background:#f0f0f0"></div>
<div class="a" style="left:160px;top:17px;width:16px;height:291px;background:#cdcdcd"></div>
<svg class="ic" style="left:163px;top:6px" width="10" height="6" viewBox="0 0 10 6"><path d="M1.500 5.500L5 2L8.500 5.500" fill="none" stroke="#484848" stroke-width="1.900"/></svg>
<svg class="ic" style="left:163px;top:376px" width="10" height="6" viewBox="0 0 10 6"><path d="M1.500 .5L5 4L8.500 .5" fill="none" stroke="#484848" stroke-width="1.900"/></svg>
<i class="dv" style="left:6px;top:10px;height:80px"></i>
<i class="dv" style="left:6px;top:95px;height:300px"></i>
<i class="dv" style="left:25px;top:98px;height:12px"></i><i class="dv" style="left:25px;top:115px;height:12px"></i><i class="dv" style="left:25px;top:135px;height:260px"></i>
<i class="dv" style="left:44px;top:138px;height:12px"></i>
<i class="dv" style="left:44px;top:155px;height:52px"></i><i class="dv" style="left:44px;top:215px;height:52px"></i>
<i class="dv" style="left:44px;top:275px;height:12px"></i>
<i class="dv" style="left:44px;top:295px;height:12px"></i>
<i class="dv" style="left:44px;top:315px;height:12px"></i>
<i class="dv" style="left:44px;top:335px;height:12px"></i>
<i class="dv" style="left:44px;top:355px;height:12px"></i>
<i class="dv" style="left:44px;top:375px;height:20px"></i>
<i class="dv" style="left:63px;top:158px;height:32px"></i><i class="dv" style="left:63px;top:218px;height:32px"></i>
<i class="ex p" style="left:2px;top:6px"></i>
<i class="dh" style="left:12px;top:10px;width:6px"></i>
<svg class="ic" style="left:18px;top:2px" width="16" height="16" viewBox="0 0 16 16" ><path d="M.6 4q0-1.200 1.200-1.200h3.400l1.300 1.500h7.700q1.200 0 1.200 1.200v8q0 1.200-1.200 1.200h-12.400q-1.200 0-1.200-1.200z" fill="#f4cc50" stroke="#9c7408" stroke-width=".9"/><path d="M1.600 6.300h12.800v7.400h-12.800z" fill="#fbe590"/><path d="M1.600 11h12.800v2.700h-12.800z" fill="#f6d468"/><rect x="5" y=".5" width="6.500" height="9.500" fill="#2c2c2c"/><rect x="6" y="1.800" width="4.500" height="1.200" fill="#e8e8e8"/><rect x="6" y="4" width="2" height="1.200" fill="#30d048"/><rect x="6" y="6.200" width="4.500" height="1" fill="#a8a8a8"/><rect x="6" y="8" width="4.500" height="1" fill="#a8a8a8"/><path d="M7 14.800l6.200-7.800" stroke="#1450d4" stroke-width="2.400"/><path d="M11.500 5.800l2.200-3.300l.6 2.400l2.200 .2l-2.400 3.200z" fill="#1450d4"/></svg>
<span class="tr" style="left:38px;top:2px">参数</span>
<i class="ex p" style="left:2px;top:26px"></i>
<i class="dh" style="left:12px;top:30px;width:6px"></i>
<svg class="ic" style="left:18px;top:22px" width="16" height="16" viewBox="0 0 16 16" ><path d="M.6 4q0-1.200 1.200-1.200h3.400l1.300 1.500h7.700q1.200 0 1.200 1.200v8q0 1.200-1.200 1.200h-12.400q-1.200 0-1.200-1.200z" fill="#f4cc50" stroke="#9c7408" stroke-width=".9"/><path d="M1.600 6.300h12.800v7.400h-12.800z" fill="#fbe590"/><path d="M1.600 11h12.800v2.700h-12.800z" fill="#f6d468"/><rect x="4.500" y="0" width="5" height="11.500" fill="#3c3c3c"/><rect x="9.500" y="2" width="4.500" height="9.500" fill="#585858"/><rect x="5.500" y="4.500" width="3" height="4.500" fill="#a4a4a4"/><rect x="10.500" y="6" width="2.500" height="4" fill="#b0b0b0"/><rect x="11.200" y="3" width="1.600" height="1.800" fill="#f41818"/><rect x="4.500" y="0" width="5" height="1.600" fill="#101010"/></svg>
<span class="tr" style="left:38px;top:22px">智能功能模块</span>
<i class="ex p" style="left:2px;top:46px"></i>
<i class="dh" style="left:12px;top:50px;width:6px"></i>
<svg class="ic" style="left:18px;top:42px" width="16" height="16" viewBox="0 0 16 16" ><path d="M.6 4q0-1.200 1.200-1.200h3.400l1.300 1.500h7.700q1.200 0 1.200 1.200v8q0 1.200-1.200 1.200h-12.400q-1.200 0-1.200-1.200z" fill="#f4cc50" stroke="#9c7408" stroke-width=".9"/><path d="M1.600 6.300h12.800v7.400h-12.800z" fill="#fbe590"/><path d="M1.600 11h12.800v2.700h-12.800z" fill="#f6d468"/><circle cx="7.500" cy="4.500" r="4.200" fill="#2c94d4"/><path d="M5.500 1.500c1.500-.5 2.500 .8 2 2s-2.400 1.400-3.200 .6zM9 4.500c1.200-.8 2.600 0 2.400 1.200l-1.800 1.300z" fill="#5cc44c"/><rect x="6" y="6.500" width="9.400" height="8.400" fill="#fff" stroke="#2430d8" stroke-width="1.100"/><path d="M6 9.300h9.400M6 12h9.400M9.300 6.500v8.400" stroke="#2430d8" stroke-width="1"/></svg>
<span class="tr" style="left:38px;top:42px">全局标签</span>
<i class="ex p" style="left:2px;top:66px"></i>
<i class="dh" style="left:12px;top:70px;width:6px"></i>
<svg class="ic" style="left:18px;top:62px" width="16" height="16" viewBox="0 0 16 16" ><path d="M.6 4q0-1.200 1.200-1.200h3.400l1.300 1.500h7.700q1.200 0 1.200 1.200v8q0 1.200-1.200 1.200h-12.400q-1.200 0-1.200-1.200z" fill="#f4cc50" stroke="#9c7408" stroke-width=".9"/><path d="M1.600 6.300h12.800v7.400h-12.800z" fill="#fbe590"/><path d="M1.600 11h12.800v2.700h-12.800z" fill="#f6d468"/><rect x="6" y="1.500" width="9.500" height="7" fill="#64b8e8" stroke="#2a2a2a" stroke-width=".9"/><path d="M7 2.500h7.500v2.500h-7.500z" fill="#a4dcf8"/><path d="M4.500 9.300h11.200v3.200h-11.200z" fill="#242424"/><path d="M6 10.800h8" stroke="#888" stroke-width=".8"/><path d="M1.200 3.200l5.600 6.800" stroke="#1c8c30" stroke-width="2.600"/><path d="M6.300 9.300l1.800 2.900l-3-.9z" fill="#ecc890"/></svg>
<span class="tr" style="left:38px;top:62px">程序设置</span>
<i class="ex m" style="left:2px;top:86px"></i>
<i class="dh" style="left:12px;top:90px;width:6px"></i>
<svg class="ic" style="left:18px;top:82px" width="16" height="16" viewBox="0 0 16 16" ><path d="M.5 5.500h15v9.500c0 .6-.4 1-1 1h-13c-.6 0-1-.4-1-1z" fill="#fcd870" stroke="#e0a820" stroke-width=".9"/><path d="M1.500 8h13v7h-13z" fill="#fde8a0"/><circle cx="5" cy="4.500" r="2.800" fill="#f0a0b8"/><rect x="9" y="1" width="5" height="6" fill="#a0d890"/><path d="M9.500 3.500l2-2.500 2.500 2.500z" fill="#60b850"/><rect x="6.500" y="5" width="3" height="3" fill="#f8c8a0"/></svg>
<span class="tr" style="left:38px;top:82px">程序部件</span>
<i class="ex p" style="left:21px;top:106px"></i>
<i class="dh" style="left:31px;top:110px;width:6px"></i>
<svg class="ic" style="left:35px;top:102px" width="16" height="16" viewBox="0 0 16 16" ><path d="M.6 4q0-1.200 1.200-1.200h3.400l1.300 1.500h7.700q1.200 0 1.200 1.200v8q0 1.200-1.200 1.200h-12.400q-1.200 0-1.200-1.200z" fill="#f4cc50" stroke="#9c7408" stroke-width=".9"/><path d="M1.600 6.300h12.800v7.400h-12.800z" fill="#fbe590"/><path d="M1.600 11h12.800v2.700h-12.800z" fill="#f6d468"/><path d="M3.500 .8h5.500l2.500 2.500v8.500h-8z" fill="#d4dcec" stroke="#7a86a0" stroke-width=".7"/><path d="M5 .3h5.500l2.500 2.500v8.500h-8z" fill="#f8f8fc" stroke="#8a92a8" stroke-width=".7"/><path d="M1.600 8.500h12.800v5.200h-12.800z" fill="#fbe590" opacity=".92"/><path d="M.6 8.500h14.800" stroke="#c09820" stroke-width=".7"/></svg>
<span class="tr" style="left:57px;top:102px">程序</span>
<i class="ex m" style="left:21px;top:126px"></i>
<i class="dh" style="left:31px;top:130px;width:6px"></i>
<svg class="ic" style="left:35px;top:122px" width="16" height="16" viewBox="0 0 16 16" ><path d="M.6 4q0-1.200 1.200-1.200h3.400l1.300 1.500h7.700q1.200 0 1.200 1.200v8q0 1.200-1.200 1.200h-12.400q-1.200 0-1.200-1.200z" fill="#f4cc50" stroke="#9c7408" stroke-width=".9"/><path d="M1.600 6.300h12.800v7.400h-12.800z" fill="#fbe590"/><path d="M1.600 11h12.800v2.700h-12.800z" fill="#f6d468"/><path d="M3.500 2h9v2.800h-9z" fill="#2c64dc"/><path d="M5.500 .4h5v2h-5z" fill="#4c84f0"/><rect x="6" y="4.2" width="9.6" height="7.6" fill="#2c9c34" stroke="#14601c" stroke-width=".8"/><rect x="7.2" y="5.2" width="4.32" height="5.6" fill="#7cd47c" opacity=".75"/></svg>
<span class="tr" style="left:57px;top:122px">FB/FUN</span>
<i class="ex m" style="left:40px;top:146px"></i>
<i class="dh" style="left:50px;top:150px;width:6px"></i>
<svg class="ic" style="left:55px;top:142px" width="16" height="16" viewBox="0 0 16 16" ><path d="M.6 4q0-1.200 1.200-1.200h3.400l1.300 1.500h7.700q1.200 0 1.200 1.200v8q0 1.200-1.200 1.200h-12.400q-1.200 0-1.200-1.200z" fill="#f4cc50" stroke="#9c7408" stroke-width=".9"/><path d="M1.600 6.300h12.800v7.400h-12.800z" fill="#fbe590"/><path d="M1.600 11h12.800v2.700h-12.800z" fill="#f6d468"/><rect x="5.5" y="4.2" width="9" height="7.2" fill="#2c9c34" stroke="#14601c" stroke-width=".8"/><rect x="6.7" y="5.2" width="4.05" height="5.2" fill="#7cd47c" opacity=".75"/></svg>
<span class="tr" style="left:76px;top:142px">AD转换</span>
<i class="dh" style="left:64px;top:170px;width:10px"></i>
<svg class="ic" style="left:75px;top:162px" width="16" height="16" viewBox="0 0 16 16" ><path d="M1.200 .8h8.400l3.600 3.600v10.800h-12z" fill="#dcdcdc" stroke="#6a6a6a" stroke-width=".9"/><path d="M2 1.600h4v13h-4z" fill="#f4f4f4" opacity=".8"/><path d="M9.600 .8v3.600h3.600z" fill="#fafafa" stroke="#6a6a6a" stroke-width=".7"/><text x="7.200" y="12.600" font-size="8.500" font-weight="bold" fill="#0a0a0a" text-anchor="middle" textLength="9.500" lengthAdjust="spacingAndGlyphs">ST</text></svg>
<span class="tr" style="left:95px;top:162px;background:#ececec;padding:0 3px;margin-left:-3px;height:20px;line-height:20px;margin-top:-2px">程序本体</span>
<i class="dh" style="left:64px;top:190px;width:10px"></i>
<svg class="ic" style="left:75px;top:182px" width="16" height="16" viewBox="0 0 16 16" ><path d="M.4 2.200c3-2 6.500-2 9.500-.6v10c-3 1.400-6.500 1.200-9.500-.4z" fill="#a4c4f0"/><path d="M1.200 2.600c2.400-1.400 5.400-1.400 8-.4v3.800h-8z" fill="#d0e4fc"/><rect x="4.600" y="6" width="10.800" height="9.400" fill="#fff" stroke="#2428dc" stroke-width="1.100"/><path d="M4.600 9.200h10.800M4.600 12.300h10.800M8.200 6v9.400" stroke="#2428dc" stroke-width="1"/><rect x="5.200" y="6.600" width="9.600" height="2" fill="#c4d0fc"/></svg>
<span class="tr" style="left:95px;top:182px">局部标签</span>
<i class="ex m" style="left:40px;top:206px"></i>
<i class="dh" style="left:50px;top:210px;width:6px"></i>
<svg class="ic" style="left:55px;top:202px" width="16" height="16" viewBox="0 0 16 16" ><path d="M.6 4q0-1.200 1.200-1.200h3.400l1.300 1.500h7.700q1.200 0 1.200 1.200v8q0 1.200-1.200 1.200h-12.400q-1.200 0-1.200-1.200z" fill="#f4cc50" stroke="#9c7408" stroke-width=".9"/><path d="M1.600 6.300h12.800v7.400h-12.800z" fill="#fbe590"/><path d="M1.600 11h12.800v2.700h-12.800z" fill="#f6d468"/><rect x="5.5" y="4.2" width="9" height="7.2" fill="#2c9c34" stroke="#14601c" stroke-width=".8"/><rect x="6.7" y="5.2" width="4.05" height="5.2" fill="#7cd47c" opacity=".75"/></svg>
<span class="tr" style="left:76px;top:202px">DRIVER</span>
<i class="dh" style="left:64px;top:230px;width:10px"></i>
<svg class="ic" style="left:75px;top:222px" width="16" height="16" viewBox="0 0 16 16" ><path d="M1.200 .8h8.400l3.600 3.600v10.800h-12z" fill="#dcdcdc" stroke="#6a6a6a" stroke-width=".9"/><path d="M2 1.600h4v13h-4z" fill="#f4f4f4" opacity=".8"/><path d="M9.600 .8v3.600h3.600z" fill="#fafafa" stroke="#6a6a6a" stroke-width=".7"/><text x="7.200" y="12.600" font-size="8.500" font-weight="bold" fill="#0a0a0a" text-anchor="middle" textLength="9.500" lengthAdjust="spacingAndGlyphs">ST</text></svg>
<span class="tr" style="left:95px;top:222px">程序本体</span>
<i class="dh" style="left:64px;top:250px;width:10px"></i>
<svg class="ic" style="left:75px;top:242px" width="16" height="16" viewBox="0 0 16 16" ><path d="M.4 2.200c3-2 6.500-2 9.500-.6v10c-3 1.400-6.500 1.200-9.500-.4z" fill="#a4c4f0"/><path d="M1.200 2.600c2.400-1.400 5.400-1.400 8-.4v3.800h-8z" fill="#d0e4fc"/><rect x="4.600" y="6" width="10.800" height="9.400" fill="#fff" stroke="#2428dc" stroke-width="1.100"/><path d="M4.600 9.200h10.800M4.600 12.300h10.800M8.200 6v9.400" stroke="#2428dc" stroke-width="1"/><rect x="5.200" y="6.600" width="9.600" height="2" fill="#c4d0fc"/></svg>
<span class="tr" style="left:95px;top:242px">局部标签</span>
<i class="ex p" style="left:40px;top:266px"></i>
<i class="dh" style="left:50px;top:270px;width:6px"></i>
<svg class="ic" style="left:55px;top:262px" width="16" height="16" viewBox="0 0 16 16" ><path d="M.6 4q0-1.200 1.200-1.200h3.400l1.300 1.500h7.700q1.200 0 1.200 1.200v8q0 1.200-1.200 1.200h-12.400q-1.200 0-1.200-1.200z" fill="#f4cc50" stroke="#9c7408" stroke-width=".9"/><path d="M1.600 6.300h12.800v7.400h-12.800z" fill="#fbe590"/><path d="M1.600 11h12.800v2.700h-12.800z" fill="#f6d468"/><rect x="5.5" y="4.2" width="9" height="7.2" fill="#2c9c34" stroke="#14601c" stroke-width=".8"/><rect x="6.7" y="5.2" width="4.05" height="5.2" fill="#7cd47c" opacity=".75"/></svg>
<span class="tr" style="left:76px;top:262px"><span style="display:inline-block;transform:scaleX(.9);transform-origin:0 50%">SPEED</span></span>
<i class="ex p" style="left:40px;top:286px"></i>
<i class="dh" style="left:50px;top:290px;width:6px"></i>
<svg class="ic" style="left:55px;top:282px" width="16" height="16" viewBox="0 0 16 16" ><path d="M.6 4q0-1.200 1.200-1.200h3.400l1.300 1.500h7.700q1.200 0 1.200 1.200v8q0 1.200-1.200 1.200h-12.400q-1.200 0-1.200-1.200z" fill="#f4cc50" stroke="#9c7408" stroke-width=".9"/><path d="M1.600 6.300h12.800v7.400h-12.800z" fill="#fbe590"/><path d="M1.600 11h12.800v2.700h-12.800z" fill="#f6d468"/><rect x="5.5" y="4.2" width="9" height="7.2" fill="#2c9c34" stroke="#14601c" stroke-width=".8"/><rect x="6.7" y="5.2" width="4.05" height="5.2" fill="#7cd47c" opacity=".75"/></svg>
<span class="tr" style="left:76px;top:282px"><span style="display:inline-block;transform:scaleX(.91);transform-origin:0 50%">SPEED_ADJ</span></span>
<i class="ex p" style="left:40px;top:306px"></i>
<i class="dh" style="left:50px;top:310px;width:6px"></i>
<svg class="ic" style="left:55px;top:302px" width="16" height="16" viewBox="0 0 16 16" ><path d="M.6 4q0-1.200 1.200-1.200h3.400l1.300 1.500h7.700q1.200 0 1.200 1.200v8q0 1.200-1.200 1.200h-12.400q-1.200 0-1.200-1.200z" fill="#f4cc50" stroke="#9c7408" stroke-width=".9"/><path d="M1.600 6.300h12.800v7.400h-12.800z" fill="#fbe590"/><path d="M1.600 11h12.800v2.700h-12.800z" fill="#f6d468"/><rect x="5.5" y="4.2" width="9" height="7.2" fill="#2c9c34" stroke="#14601c" stroke-width=".8"/><rect x="6.7" y="5.2" width="4.05" height="5.2" fill="#7cd47c" opacity=".75"/></svg>
<span class="tr" style="left:76px;top:302px">分切裁刀</span>
<i class="ex p" style="left:40px;top:326px"></i>
<i class="dh" style="left:50px;top:330px;width:6px"></i>
<svg class="ic" style="left:55px;top:322px" width="16" height="16" viewBox="0 0 16 16" ><path d="M.6 4q0-1.200 1.200-1.200h3.400l1.300 1.500h7.700q1.200 0 1.200 1.200v8q0 1.200-1.200 1.200h-12.400q-1.200 0-1.200-1.200z" fill="#f4cc50" stroke="#9c7408" stroke-width=".9"/><path d="M1.600 6.300h12.800v7.400h-12.800z" fill="#fbe590"/><path d="M1.600 11h12.800v2.700h-12.800z" fill="#f6d468"/><rect x="5.5" y="4.2" width="9" height="7.2" fill="#2c9c34" stroke="#14601c" stroke-width=".8"/><rect x="6.7" y="5.2" width="4.05" height="5.2" fill="#7cd47c" opacity=".75"/></svg>
<span class="tr" style="left:76px;top:322px">卷绕变频</span>
<i class="ex p" style="left:40px;top:346px"></i>
<i class="dh" style="left:50px;top:350px;width:6px"></i>
<svg class="ic" style="left:55px;top:342px" width="16" height="16" viewBox="0 0 16 16" ><path d="M.6 4q0-1.200 1.200-1.200h3.400l1.300 1.500h7.700q1.200 0 1.200 1.200v8q0 1.200-1.200 1.200h-12.400q-1.200 0-1.200-1.200z" fill="#f4cc50" stroke="#9c7408" stroke-width=".9"/><path d="M1.600 6.300h12.800v7.400h-12.800z" fill="#fbe590"/><path d="M1.600 11h12.800v2.700h-12.800z" fill="#f6d468"/><rect x="5.5" y="4.2" width="9" height="7.2" fill="#2c9c34" stroke="#14601c" stroke-width=".8"/><rect x="6.7" y="5.2" width="4.05" height="5.2" fill="#7cd47c" opacity=".75"/></svg>
<span class="tr" style="left:76px;top:342px">变频</span>
<i class="ex p" style="left:40px;top:366px"></i>
<i class="dh" style="left:50px;top:370px;width:6px"></i>
<svg class="ic" style="left:55px;top:362px" width="16" height="16" viewBox="0 0 16 16" ><path d="M.6 4q0-1.200 1.200-1.200h3.400l1.300 1.500h7.700q1.200 0 1.200 1.200v8q0 1.200-1.200 1.200h-12.400q-1.200 0-1.200-1.200z" fill="#f4cc50" stroke="#9c7408" stroke-width=".9"/><path d="M1.600 6.300h12.800v7.400h-12.800z" fill="#fbe590"/><path d="M1.600 11h12.800v2.700h-12.800z" fill="#f6d468"/><rect x="5.5" y="4.2" width="9" height="7.2" fill="#2c9c34" stroke="#14601c" stroke-width=".8"/><rect x="6.7" y="5.2" width="4.05" height="5.2" fill="#7cd47c" opacity=".75"/></svg>
<span class="tr" style="left:76px;top:362px">辊距</span>
<i class="dh" style="left:26px;top:390px;width:10px"></i>
<svg class="ic" style="left:35px;top:382px" width="16" height="16" viewBox="0 0 16 16" ><path d="M.6 4q0-1.200 1.200-1.200h3.400l1.300 1.500h7.700q1.200 0 1.200 1.200v8q0 1.200-1.200 1.200h-12.400q-1.200 0-1.200-1.200z" fill="#f4cc50" stroke="#9c7408" stroke-width=".9"/><path d="M1.600 6.300h12.800v7.400h-12.800z" fill="#fbe590"/><path d="M1.600 11h12.800v2.700h-12.800z" fill="#f6d468"/><rect x="3" y=".5" width="6" height="4.500" fill="#d42468"/><rect x="9" y=".5" width="5" height="4.500" fill="#2c2c2c"/></svg>
<span class="tr" style="left:57px;top:382px">结构体</span>
</div>
<div class="a" style="left:0;top:571px;width:177px;height:7px;background:linear-gradient(#b4b4cc,#9696b6)"></div>
<div class="a" style="left:70px;top:573px;width:34px;height:3px;background:repeating-linear-gradient(90deg,#3a3a6a 0 2px,#fff 2px 3px,transparent 3px 4px)"></div>
<div class="a" style="left:0;top:578px;width:177px;height:32px;background:linear-gradient(#fde992 0%,#fbd570 25%,#f7ba42 55%,#f3a425 85%,#f29c1e 100%)"></div>
<div class="a" style="left:0;top:610px;width:177px;height:1px;background:#8a8aae"></div>
<div class="a" style="left:0;top:611px;width:177px;height:24px;background:linear-gradient(#f0f0f8,#e2e2ef 30%,#b8b8d2 80%,#a8a8c6)"></div>
<svg class="ic" style="left:4px;top:582px" width="24" height="24" viewBox="0 0 24 24" ><path d="M7.500 1.500l9.500-1.200v13l-9.500 2z" fill="#6e6e6e"/><path d="M8.500 2.800l7.500-1v10.400l-7.500 1.600z" fill="#9a9a9a"/><path d="M8.500 2.800l7.500-1v4l-7.500 5z" fill="#b4b4b4" opacity=".6"/><path d="M0 17.500l7.500-2.200l9.500-2v1.500l-12 4.200z" fill="#8c8c8c"/><path d="M0 17.500l5 1.500l12-4.200v1l-12 4.200l-5-1.500z" fill="#5a5a5a"/><rect x="10" y="11.500" width="5" height="12.500" fill="#e4301c"/><rect x="10" y="11.500" width="1.500" height="12.500" fill="#f46a50"/><rect x="11.500" y="9" width="1.600" height="2.600" fill="#3a3a3a"/><rect x="15" y="9" width="9" height="15" fill="#2c2c2c"/><rect x="15" y="9" width="3" height="15" fill="#4a4a4a"/><rect x="16.500" y="11" width="1.200" height="4" fill="#30d060"/><rect x="19.500" y="11" width="3.500" height="11" fill="#8a8a8a"/><path d="M19.500 13.500h3.500M19.500 16h3.500M19.500 18.500h3.500" stroke="#e8e8e8" stroke-width="1.200"/></svg><svg class="ic" style="left:3px;top:614px" width="24" height="24" viewBox="0 0 24 24" ><path d="M1 3c4-2 8-2 11 1c3-3 7-3 11-1v16c-4-2-8-2-11 1c-3-3-7-3-11-1z" fill="#f4ecd8" stroke="#8a6a3a" stroke-width="1"/><path d="M12 4v16" stroke="#8a6a3a" stroke-width="1"/><path d="M3 6c3-1 5-1 7 .5M3 9c3-1 5-1 7 .5M3 12c3-1 5-1 7 .5M14 6.500c2-1.500 4-1.500 7-.5M14 9.500c2-1.500 4-1.500 7-.5" stroke="#b8a888" stroke-width=".8" fill="none"/><path d="M15 14l2-4c.5-1 2-.5 1.500 .8l-1 3 3 1.200c1 .5 1.500 1.500 1 3l-1 4h-6l-1.500-3c-.5-1.500 0-3 2-5z" fill="#f8d040" stroke="#a07810" stroke-width=".8"/></svg>
<div class="a" style="left:32px;top:587px;font-size:12px;font-weight:bold;line-height:17px">工程</div>
<div class="a" style="left:32px;top:619px;font-size:12px;font-weight:bold;line-height:17px">用户库</div>
<div class="a" style="left:176px;top:110px;width:1px;height:525px;background:#9a9ab8"></div>
<div class="a" style="left:177px;top:106px;width:4px;height:529px;background:#dcdcec"></div>
<div class="a" style="left:181px;top:106px;width:610px;height:25px;background:linear-gradient(#fff 0,#fff 40%,#e9e9f5 100%)"></div>
<div class="a" style="left:181px;top:109px;width:610px;height:1px;background:#1a44a8"></div>
<div class="a" style="left:181px;top:131px;width:610px;height:1px;background:#3a66b8"></div>
<svg class="ic" style="left:338px;top:113px" width="13" height="15" viewBox="0 0 13 15" ><path d="M1.300 1.300h8l3.400 3.400v10h-11.400z" fill="#b8bcc8" opacity=".7"/><path d="M.6 .6h7.800l3.600 3.600v10h-11.400z" fill="#fdfdfd" stroke="#8a92a8" stroke-width=".9"/><path d="M8.400 .6v3.600h3.600z" fill="#d4d8e4" stroke="#8a92a8" stroke-width=".7"/><path d="M1.600 8h3.200M10.600 8h-3.200" stroke="#e81818" stroke-width="1.500"/><path d="M5.300 5.400v5.200M6.900 5.400v5.200" stroke="#e81818" stroke-width="1"/><path d="M3.400 6.200l1.800 1.800l-1.800 1.800zM8.800 6.200l-1.800 1.800l1.800 1.800z" fill="#e81818"/></svg>
<svg class="ic" style="left:519px;top:113px" width="13" height="15" viewBox="0 0 13 15" ><path d="M1.300 1.300h8l3.400 3.400v10h-11.400z" fill="#b8bcc8" opacity=".7"/><path d="M.6 .6h7.800l3.600 3.600v10h-11.400z" fill="#fdfdfd" stroke="#8a92a8" stroke-width=".9"/><path d="M8.400 .6v3.600h3.600z" fill="#d4d8e4" stroke="#8a92a8" stroke-width=".7"/><path d="M1.600 8h3.200M10.600 8h-3.200" stroke="#e81818" stroke-width="1.500"/><path d="M5.300 5.400v5.200M6.900 5.400v5.200" stroke="#e81818" stroke-width="1"/><path d="M3.400 6.200l1.800 1.800l-1.800 1.800zM8.800 6.200l-1.800 1.800l1.800 1.800z" fill="#e81818"/></svg>
<svg class="ic" style="left:724px;top:113px" width="13" height="15" viewBox="0 0 13 15" ><path d="M1.300 1.300h8l3.400 3.400v10h-11.400z" fill="#b8bcc8" opacity=".7"/><path d="M.6 .6h7.800l3.600 3.600v10h-11.400z" fill="#fdfdfd" stroke="#8a92a8" stroke-width=".9"/><path d="M8.400 .6v3.600h3.600z" fill="#d4d8e4" stroke="#8a92a8" stroke-width=".7"/><path d="M1.600 8h3.200M10.600 8h-3.200" stroke="#e81818" stroke-width="1.500"/><path d="M5.300 5.400v5.200M6.900 5.400v5.200" stroke="#e81818" stroke-width="1"/><path d="M3.400 6.200l1.800 1.800l-1.800 1.800zM8.800 6.200l-1.800 1.800l1.800 1.800z" fill="#e81818"/></svg>
<span class="tab" style="left:180.7px;letter-spacing:-0.541px">[PRG]R</span>
<span class="tab" style="left:221.9px;letter-spacing:0.992px">写入</span>
<span class="tab" style="left:250.7px;letter-spacing:0.442px">卷取</span>
<span class="tab" style="left:278.9px;letter-spacing:0.574px">1331</span>
<span class="tab" style="left:306.9px;letter-spacing:0px">步</span>
<span class="tab" style="left:355.7px;letter-spacing:-0.541px">[PRG]R</span>
<span class="tab" style="left:398.7px;letter-spacing:0.342px">写入</span>
<span class="tab" style="left:427.2px;letter-spacing:0.195px">压延辊</span>
<span class="tab" style="left:467.1px;letter-spacing:0.256px">706</span>
<span class="tab" style="left:487.4px;letter-spacing:0px">步</span>
<span class="tab" style="left:536.7px;letter-spacing:-0.454px">[PRG]</span>
<span class="tab" style="left:566.9px;letter-spacing:0.842px">读取</span>
<span class="tab" style="left:595.4px;letter-spacing:0.628px">分切刀</span>
<span class="tab" style="left:636.4px;letter-spacing:-0.225px">(只读)</span>
<span class="tab" style="left:672.0px;letter-spacing:0px">310</span>
<span class="tab" style="left:691.4px;letter-spacing:0px">步</span>
<span class="tab" style="left:741.7px;letter-spacing:-0.307px">[PRG]R</span>
<span class="tab" style="left:785.1px;letter-spacing:0.742px">写入</span>
<svg class="ic" style="left:324px;top:106px" width="12" height="25" viewBox="0 0 12 25"><rect x="3.6" y="2.800" width="5" height="1.600" fill="#fff"/><path d="M0 3.500h2c1 0 1.500 .6 1.500 1.600V25" fill="none" stroke="#1a4cc0" stroke-width="1.100"/><path d="M3.800 6.400L9 3.500" fill="none" stroke="#1a4cc0" stroke-width="1.100"/></svg>
<svg class="ic" style="left:505px;top:106px" width="12" height="25" viewBox="0 0 12 25"><rect x="3.6" y="2.800" width="5" height="1.600" fill="#fff"/><path d="M0 3.500h2c1 0 1.500 .6 1.500 1.600V25" fill="none" stroke="#1a4cc0" stroke-width="1.100"/><path d="M3.800 6.400L9 3.500" fill="none" stroke="#1a4cc0" stroke-width="1.100"/></svg>
<svg class="ic" style="left:710.6px;top:106px" width="12" height="25" viewBox="0 0 12 25"><rect x="3.6" y="2.800" width="5" height="1.600" fill="#fff"/><path d="M0 3.500h2c1 0 1.500 .6 1.500 1.600V25" fill="none" stroke="#1a4cc0" stroke-width="1.100"/><path d="M3.800 6.400L9 3.500" fill="none" stroke="#1a4cc0" stroke-width="1.100"/></svg>
<div class="a" style="left:181px;top:132px;width:610px;height:503px;background:#f8bf72"></div>
<div class="a" style="left:181px;top:132px;width:1px;height:503px;background:#3a66b8"></div>
<div class="a" style="left:184px;top:134px;width:607px;height:501px;background:#7f7f7f"></div>
<div class="a" style="left:185px;top:135px;width:606px;height:500px;background:#f0f0f0"></div>
<div class="a" style="left:204px;top:135px;width:587px;height:500px;background:#fff"></div>
<div id="code" class="a">
<div id="L0" style="left:204.8px;top:0px;letter-spacing:-0.0583px"><span class="g">(*********************************************************************************</span></div>
<div id="L1" style="left:205.2px;top:18px;letter-spacing:-0.2312px"><span class="g">作者：CXY001      手机15961734804  ; 18914106785</span></div>
<div style="left:204.8px;top:36px;letter-spacing:0.0969px"><span class="g">(* OUT_VAL:=REAL_TO_INT</span></div>
<div style="left:376.7px;top:36px;letter-spacing:0.1133px"><span class="g">((((INT_TO_REAL</span></div>
<div style="left:482.9px;top:36px;letter-spacing:-0.256px"><span class="g">(AD_IN)-K1)</span></div>
<div style="left:551.6px;top:36px;letter-spacing:-0.2062px"><span class="g">/(K2 - K1))*(HI_LIM-LO_LIM))+LO_LIM);*)</span></div>
<div id="L4" style="left:204.4px;top:72px;letter-spacing:0.0303px"><span class="b">IF </span><span class="m">ENI</span> &amp; <span class="m">IN_MAX</span>&gt;0 <span class="b">THEN</span></div>
<div id="L6" style="left:219.3px;top:108px;letter-spacing:0.048px"><span class="m">E_MAX</span>:=INT_TO_REAL(<span class="m">IN_MAX</span>);</div>
<div id="L7" style="left:219.3px;top:126px;letter-spacing:0.0483px"><span class="m">E_MIN</span>:=INT_TO_REAL(<span class="m">IN_MAX</span>/10);</div>
<div style="left:217.0px;top:162px;letter-spacing:0.1095px"><span class="g">(* MIN_1:=REAL_TO_INT(INT_TO_REAL</span></div>
<div style="left:461.8px;top:162px;letter-spacing:-0.2457px"><span class="g">(limits)</span></div>
<div style="left:498.1px;top:162px;letter-spacing:0.0574px"><span class="g">*E2/(E_MAX-E_MIN)*(INT_TO_REAL(IN_AD)-</span></div>
<div style="left:769.5px;top:162px;letter-spacing:0px"><span class="g">E_MIN)*(limits*2));*)</span></div>
<div style="left:220.2px;top:198px;letter-spacing:0.1042px"><span class="m">OUT_AD</span></div>
<div style="left:273.56px;top:198px;letter-spacing:0.1042px">:=REAL_TO_INT((((INT_TO_REAL(</div>
<div style="left:483.8px;top:198px;letter-spacing:0.3px"><span class="m">IN_AD</span></div>
<div style="left:524.99px;top:198px;letter-spacing:0.3px">) </div>
<div style="left:534.1px;top:198px;letter-spacing:-0.1467px">-INT_TO_REAL( </div>
<div style="left:631.5px;top:198px;letter-spacing:-0.1104px"><span class="m">IN_MIN</span></div>
<div style="left:674.9px;top:198px;letter-spacing:0.0932px">))/(INT_TO_REAL(</div>
<div style="left:784.5px;top:198px;letter-spacing:0px"><span class="m">IN_MAX</span></div>
<div style="left:220.2px;top:216px;letter-spacing:0.0662px"><span class="m">OUT_AD_E</span></div>
<div style="left:289.37px;top:216px;letter-spacing:0.0662px">:=(((INT_TO_REAL(</div>
<div style="left:406.2px;top:216px;letter-spacing:0.15px"><span class="m">IN_AD</span></div>
<div style="left:445.25px;top:216px;letter-spacing:0.15px">) </div>
<div style="left:453.5px;top:216px;letter-spacing:0.0987px">-INT_TO_REAL</div>
<div style="left:546.2px;top:216px;letter-spacing:-0.1766px">( </div>
<div style="left:553.8px;top:216px;letter-spacing:0.0649px"><span class="m">IN_MIN</span></div>
<div style="left:598.25px;top:216px;letter-spacing:0.0649px">))/(INT_TO_REAL(</div>
<div style="left:707.4px;top:216px;letter-spacing:-0.2177px"><span class="m">IN_MAX</span></div>
<div style="left:754.5px;top:216px;letter-spacing:0.0458px">)  </div>
<div style="left:766.2px;top:216px;letter-spacing:-0.3px">- </div>
<div style="left:772.3px;top:216px;letter-spacing:0px">INT_TO_REAL(</div>
<div id="L13" style="left:220.0px;top:234px;letter-spacing:0.0271px"><span class="g">(*OUT_AD:=LIMITATION(-1*limits,MIN_1,limits);*)</span></div>
<div id="L15" style="left:204.6px;top:270px;letter-spacing:0.4162px"><span class="b">ELSE</span></div>
<div id="L17" style="left:226.1px;top:306px;letter-spacing:0.0676px"><span class="m">OUT_AD</span>:=0;</div>
<div id="L18" style="left:226.1px;top:324px;letter-spacing:-0.0034px"><span class="m">OUT_AD_E</span>:=0.0;</div>
<div id="L20" style="left:207.8px;top:360px;letter-spacing:0.139px"><span class="b">END_IF</span>;</div>
<div id="L22" style="left:219.3px;top:396px;letter-spacing:0.1076px"><span class="b">IF </span>INT_TO_REAL(<span class="m">IN_AD</span>) &lt; INT_TO_REAL(<span class="m">IN_MIN</span>) <span class="b">THEN</span></div>
<div id="L24" style="left:223.1px;top:432px;letter-spacing:0.0869px"><span class="m">OUT_AD</span>:=REAL_TO_INT(<span class="m">LO_LIM</span>);</div>
<div id="L25" style="left:223.1px;top:450px;letter-spacing:-0.0016px"><span class="m">OUT_AD_E</span>:=<span class="m">LO_LIM</span>;</div>
<div id="L27" style="left:219.5px;top:486px;letter-spacing:0.0759px"><span class="b">END_IF</span>;</div>
</div>
</body></html>
